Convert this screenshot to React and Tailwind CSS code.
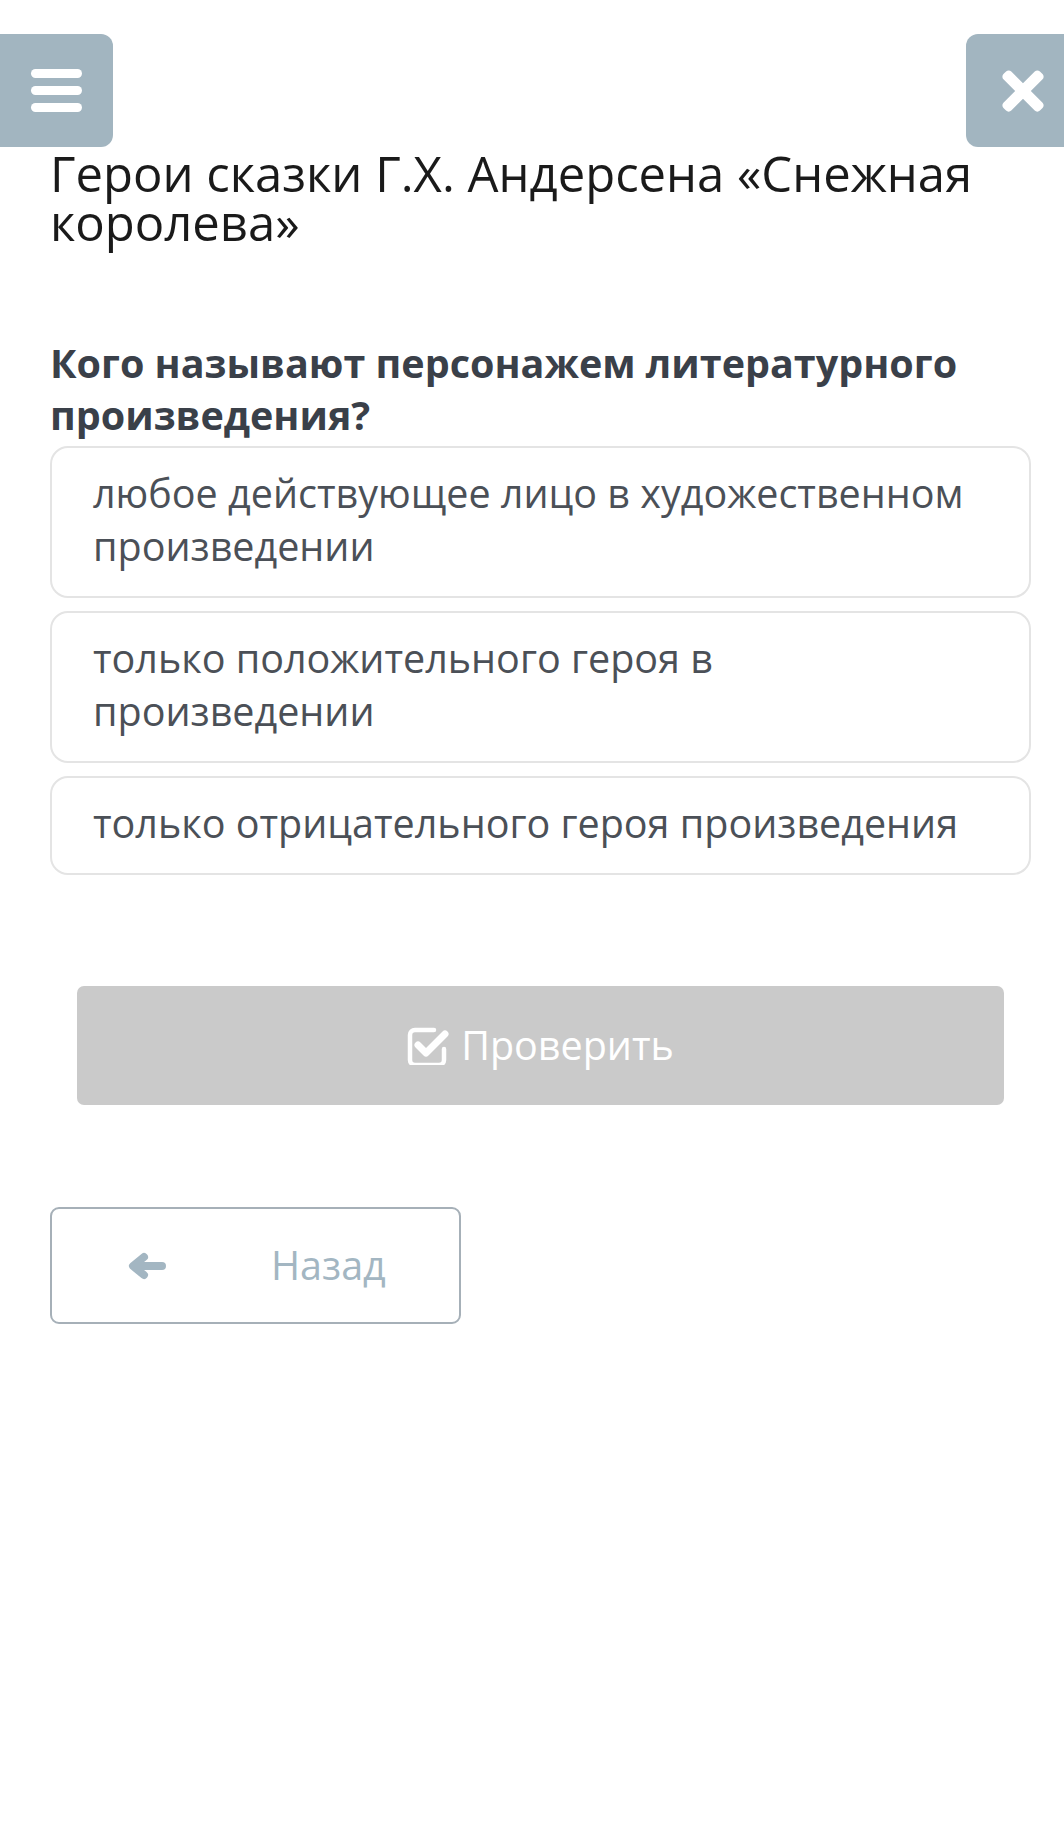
import React, { useState } from "react";
import { FaTimes } from "react-icons/fa";

const options = [
  "любое действующее лицо в художественном произведении",
  "только положительного героя в произведении",
  "только отрицательного героя произведения",
];

function CheckSquareIcon() {
  return (
    <svg width="42" height="38" viewBox="0 0 42 38" fill="none">
      <path
        d="M27 3H8a5 5 0 0 0-5 5v25a5 5 0 0 0 5 5h24a5 5 0 0 0 5-5V22"
        stroke="white"
        strokeWidth="4.5"
        strokeLinecap="round"
      />
      <path
        d="M11 18l8 8L38 7"
        stroke="white"
        strokeWidth="7"
        strokeLinecap="round"
        strokeLinejoin="round"
      />
    </svg>
  );
}

function ArrowLeftIcon() {
  return (
    <svg width="40" height="28" viewBox="0 0 40 28" fill="none">
      <path
        d="M35 14H8M17 5L6 14L17 23"
        stroke="#a3b6c2"
        strokeWidth="8"
        strokeLinecap="round"
        strokeLinejoin="round"
      />
    </svg>
  );
}

export default function App() {
  const [selected, setSelected] = useState(null);

  return (
    <div
      className="relative min-h-screen bg-white"
      style={{ fontFamily: '"Open Sans", "Noto Sans", sans-serif' }}
    >
      {/* top overlay buttons */}
      <button className="absolute left-0 top-[34px] w-[113px] h-[113px] bg-[#a2b5c0] rounded-r-[12px] flex flex-col items-center justify-center gap-[8px]">
        <span className="block w-[51px] h-[9px] rounded-full bg-white" />
        <span className="block w-[51px] h-[9px] rounded-full bg-white" />
        <span className="block w-[51px] h-[9px] rounded-full bg-white" />
      </button>
      <button className="absolute right-0 top-[34px] w-[98px] h-[113px] bg-[#a2b5c0] rounded-l-[12px] flex items-center justify-center pl-[16px]">
        <FaTimes size={60} color="white" />
      </button>

      <div className="pl-[50px] pr-[33px] pt-[149px]">
        <h1 className="text-[49px] leading-[49px] text-[#1a1a1a] font-normal">
          Герои сказки Г.Х. Андерсена «Снежная королева»
        </h1>

        <h2 className="mt-[90px] text-[39.5px] leading-[52px] font-bold text-[#3a4049]">
          Кого называют персонажем литературного произведения?
        </h2>

        <div className="mt-[5px] flex flex-col gap-[13px]">
          {options.map((o, i) => (
            <div
              key={i}
              onClick={() => setSelected(i)}
              className={
                "border-2 rounded-[18px] px-[41px] pt-[19px] pb-[23px] text-[39.5px] leading-[53px] text-[#4b5057] cursor-pointer " +
                (selected === i ? "border-[#a2b5c0]" : "border-[#e4e4e4]")
              }
            >
              {o}
            </div>
          ))}
        </div>

        <div className="mt-[111px] px-[27px]">
          <button
            disabled
            className="w-full h-[119px] rounded-[7px] bg-[#cacaca] flex items-center justify-center gap-[12px] text-white text-[39.5px]"
          >
            <CheckSquareIcon />
            <span>Проверить</span>
          </button>
        </div>

        <button className="mt-[102px] w-[411px] h-[117px] border-2 border-[#a6b0b8] rounded-[9px] flex items-center pl-[75px]">
          <ArrowLeftIcon />
          <span className="ml-[104px] text-[39.5px] text-[#a3b6c2]">Назад</span>
        </button>
      </div>
    </div>
  );
}
